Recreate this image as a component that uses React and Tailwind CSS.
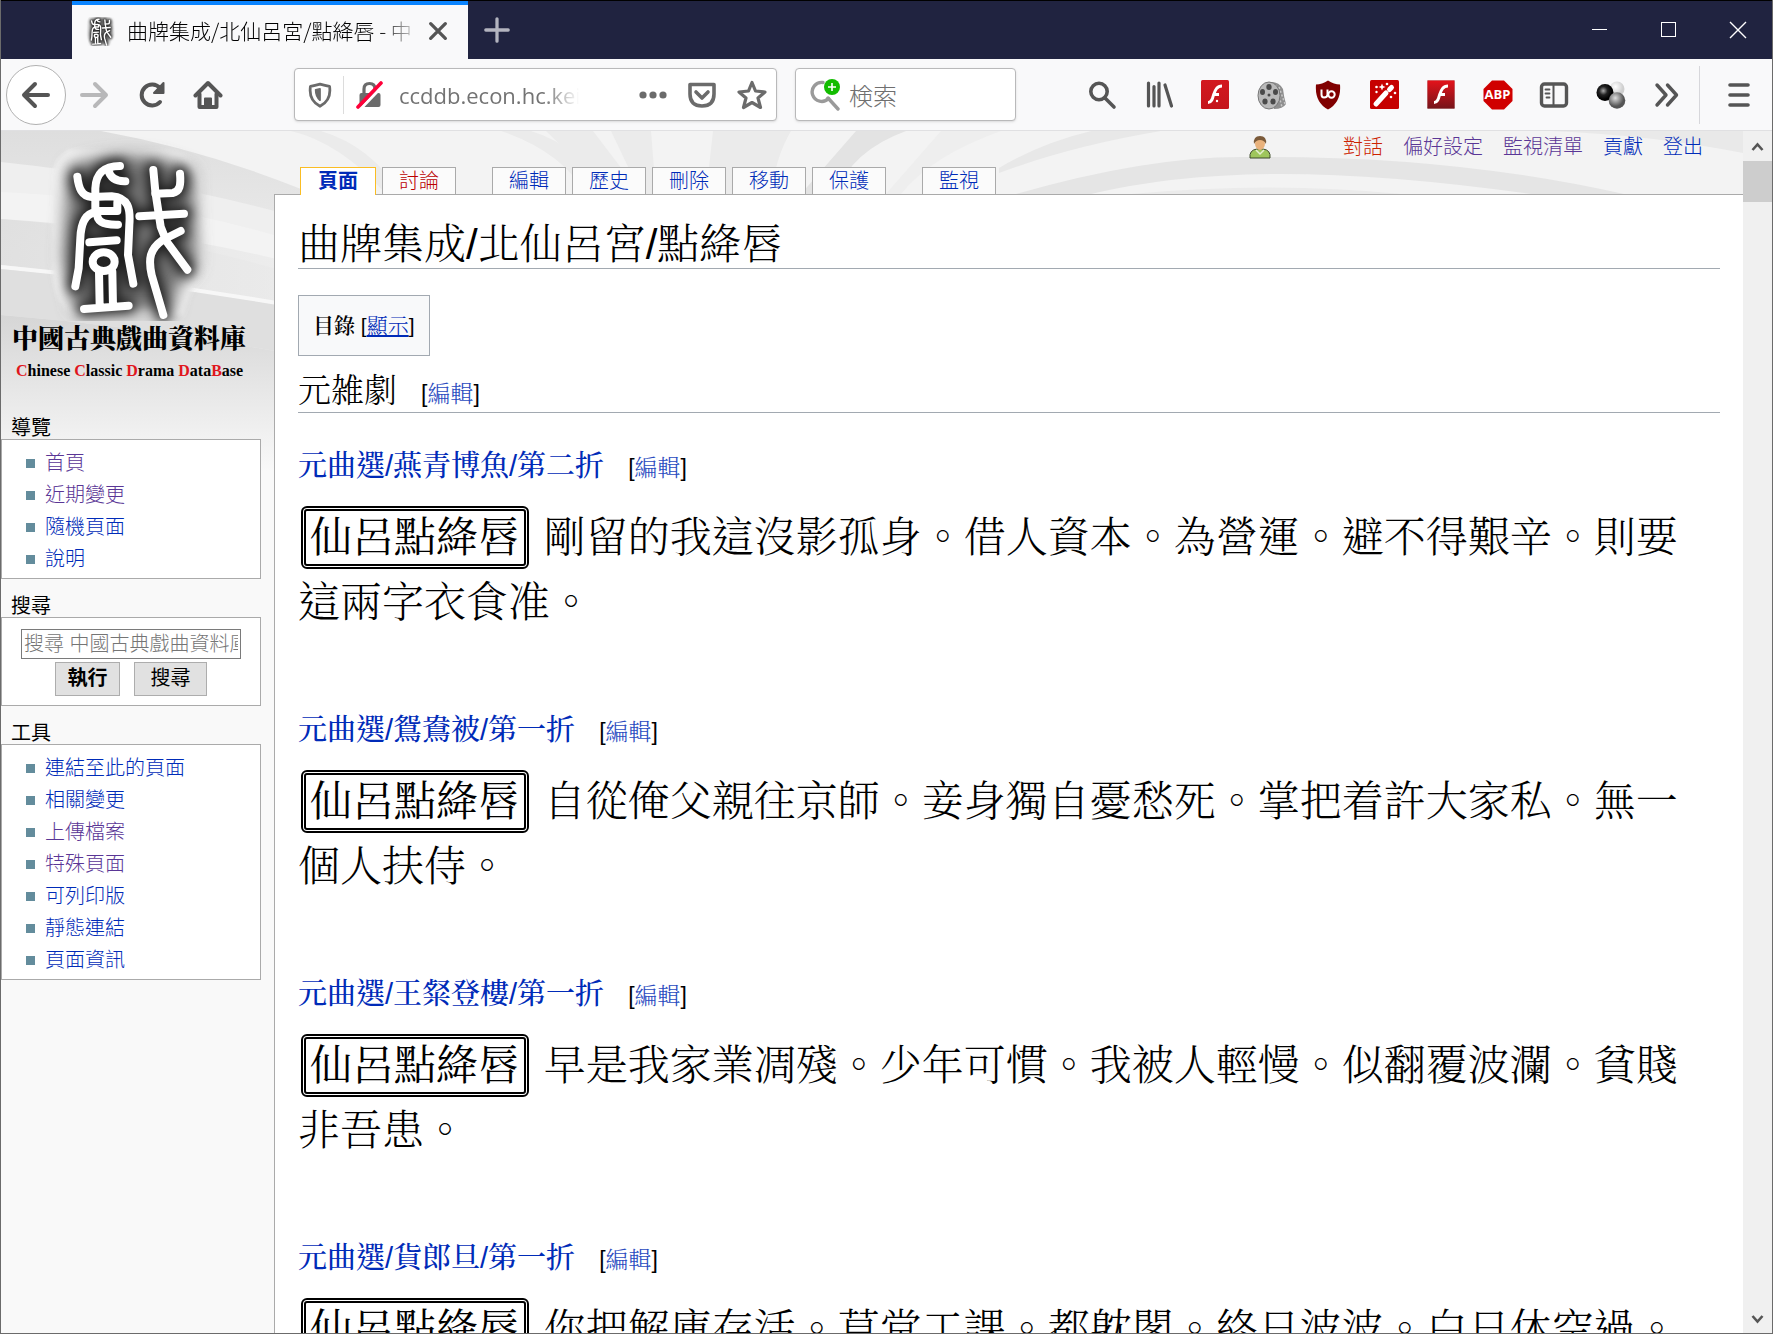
import { Fragment } from 'react';

const NAV_LINKS = [
  { label: '首頁', visited: true },
  { label: '近期變更', visited: true },
  { label: '隨機頁面' },
  { label: '說明' },
];

const TOOL_LINKS = [
  { label: '連結至此的頁面' },
  { label: '相關變更' },
  { label: '上傳檔案', visited: true },
  { label: '特殊頁面', visited: true },
  { label: '可列印版' },
  { label: '靜態連結' },
  { label: '頁面資訊' },
];

const PERSONAL_LINKS = [
  { label: '對話', color: 'text-[#cc2200]' },
  { label: '偏好設定', color: 'text-[#5a3696]' },
  { label: '監視清單', color: 'text-[#5a3696]' },
  { label: '貢獻', color: 'text-[#002bb8]' },
  { label: '登出', color: 'text-[#002bb8]' },
];

const TAB_GROUPS = [
  [
    { label: '頁面', selected: true },
    { label: '討論', missing: true },
  ],
  [{ label: '編輯' }, { label: '歷史' }, { label: '刪除' }, { label: '移動' }, { label: '保護' }],
  [{ label: '監視' }],
];

const ENTRIES = [
  { title: '元曲選/燕青博魚/第二折', text: '剛留的我這沒影孤身。借人資本。為營運。避不得艱辛。則要這兩字衣食准。' },
  { title: '元曲選/鴛鴦被/第一折', text: '自從俺父親往京師。妾身獨自憂愁死。掌把着許大家私。無一個人扶侍。' },
  { title: '元曲選/王粲登樓/第一折', text: '早是我家業凋殘。少年可慣。我被人輕慢。似翻覆波瀾。貧賤非吾患。' },
  { title: '元曲選/貨郎旦/第一折', text: '你把解庫存活。草堂工課。都躭閣。終日波波。白日休空過。' },
];

/* ---------- toolbar icons ---------- */

function Stroke({ children, width = 4, className = 'text-[#555]', size = 30 }) {
  return (
    <svg width={size} height={size} viewBox="0 0 30 30" fill="none" stroke="currentColor" strokeWidth={width} strokeLinecap="round" strokeLinejoin="round" className={className} aria-hidden="true">
      {children}
    </svg>
  );
}

function SearchIcon() {
  return (
    <Stroke width={3.6}>
      <circle cx="12" cy="11.5" r="8.2" />
      <path d="M18 18 L27 27" />
    </Stroke>
  );
}

function LibraryIcon() {
  return (
    <Stroke width={3.2}>
      <path d="M4.500 3v23M10 6.500v19.500M15 3v23M21 5l6.500 21" />
    </Stroke>
  );
}

function FlashIcon({ dark }) {
  return (
    <svg width="28" height="29" viewBox="0 0 28 29" aria-hidden="true">
      <defs>
        <linearGradient id={dark ? 'flashDark' : 'flashRed'} x1="0" y1="0" x2="0" y2="1">
          <stop offset="0" stopColor={dark ? '#e6131b' : '#d3181f'} />
          <stop offset="1" stopColor={dark ? '#74141a' : '#c4151c'} />
        </linearGradient>
      </defs>
      <rect width="28" height="29" rx="1.5" fill={dark ? 'url(#flashDark)' : 'url(#flashRed)'} stroke={dark ? '#c9a5a5' : 'none'} />
      <path d="M21 6 C15.500 6 14 11 12.500 15 C11.500 19 10.500 22.500 7 22.500 M12 14.500 H18" fill="none" stroke="#fff" strokeWidth="3" />
      {!dark && <circle cx="16" cy="21" r="1.200" fill="#fff" />}
    </svg>
  );
}

function FilmIcon() {
  return (
    <svg width="30" height="30" viewBox="0 0 30 30" aria-hidden="true">
      <path d="M12 2 Q22 1 26 9 Q27 18 29 24 Q26 29 17 29 Z" fill="#8f8f8f" />
      <path d="M19 5 L25 27 M22 7 L28 24" stroke="#c9c9c9" strokeWidth="1.5" strokeDasharray="2 2" />
      <ellipse cx="12" cy="15.500" rx="11" ry="13.500" fill="#b9b9b9" stroke="#777" />
      <g fill="#4a4a4a">
        <ellipse cx="12" cy="7" rx="2.700" ry="3" />
        <ellipse cx="5.500" cy="12" rx="2.500" ry="3" />
        <ellipse cx="18.500" cy="12" rx="2.500" ry="3" />
        <ellipse cx="8" cy="21.500" rx="2.600" ry="3" />
        <ellipse cx="16" cy="21.500" rx="2.600" ry="3" />
        <circle cx="12" cy="15" r="1.500" />
      </g>
    </svg>
  );
}

function UblockIcon() {
  return (
    <svg width="26" height="30" viewBox="0 0 26 30" aria-hidden="true">
      <path d="M13 0.500 Q19 4.500 25 4.500 Q26.500 22 13 29.500 Q-0.500 22 1 4.500 Q7 4.500 13 0.500Z" fill="#800000" />
      <path d="M6.500 9.500 V14.500 Q6.500 17.500 9 17.500 Q12.500 17.500 12.500 14.500 V9.500" fill="none" stroke="#fff" strokeWidth="2" />
      <circle cx="16.500" cy="14.500" r="3.200" fill="none" stroke="#fff" strokeWidth="2" />
    </svg>
  );
}

function WandIcon() {
  return (
    <svg width="29" height="29" viewBox="0 0 29 29" aria-hidden="true">
      <rect width="29" height="29" rx="1.5" fill="#c60000" />
      <path d="M6 24 L16 13" stroke="#fff" strokeWidth="5" strokeLinecap="round" />
      <path d="M19.500 9.500 L21.500 7.500" stroke="#fff" strokeWidth="5" strokeLinecap="round" />
      <g fill="#fff">
        <path d="M12 3.500l1 2.500 2.500 1-2.500 1-1 2.500-1-2.500-2.500-1 2.500-1z" />
        <circle cx="6.500" cy="7" r="1.300" />
        <circle cx="6.500" cy="12" r="1.200" />
        <circle cx="17" cy="4" r="1.300" />
        <circle cx="25" cy="13" r="1.300" />
        <circle cx="21" cy="17" r="1.300" />
      </g>
    </svg>
  );
}

function AbpIcon() {
  return (
    <span className="relative flex size-[30px] items-center justify-center">
      <svg width="30" height="30" viewBox="0 0 30 30" className="absolute inset-0" aria-hidden="true">
        <path d="M9 0.500 H21 L29.500 9 V21 L21 29.500 H9 L0.500 21 V9 Z" fill="#d00000" />
      </svg>
      <span className="relative font-['Open_Sans',sans-serif] text-[13px] leading-none font-bold text-white">ABP</span>
    </span>
  );
}

function SidebarIcon() {
  return (
    <Stroke width={3.4}>
      <rect x="2.500" y="4" width="25" height="22" rx="3" />
      <path d="M14.500 4.500 V25.500" strokeWidth="2" />
      <path d="M6.500 9.500h4M6.500 13.500h4M7.500 17.500h3" strokeWidth="1.800" />
    </Stroke>
  );
}

function BallsIcon() {
  return (
    <svg width="30" height="30" viewBox="0 0 30 30" aria-hidden="true">
      <defs>
        <radialGradient id="ballWhite" cx="0.4" cy="0.35"><stop offset="0" stopColor="#fff" /><stop offset="1" stopColor="#cfcfcf" /></radialGradient>
        <radialGradient id="ballBlack" cx="0.4" cy="0.4"><stop offset="0" stopColor="#aaa" /><stop offset="0.5" stopColor="#222" /><stop offset="1" stopColor="#000" /></radialGradient>
        <radialGradient id="ballGray" cx="0.4" cy="0.35"><stop offset="0" stopColor="#ddd" /><stop offset="1" stopColor="#555" /></radialGradient>
      </defs>
      <circle cx="21" cy="9" r="7.500" fill="url(#ballWhite)" />
      <circle cx="9" cy="12.500" r="8.500" fill="url(#ballBlack)" />
      <circle cx="21" cy="20.500" r="8.300" fill="url(#ballGray)" />
    </svg>
  );
}

function OverflowIcon() {
  return (
    <Stroke width={3.4}>
      <path d="M5 5 L14 15 L5 25 M15.500 5 L24.500 15 L15.500 25" />
    </Stroke>
  );
}

const EXTENSIONS = [
  { name: '尋找', icon: <SearchIcon /> },
  { name: '書庫', icon: <LibraryIcon /> },
  { name: 'Flash', icon: <FlashIcon /> },
  { name: '影片', icon: <FilmIcon /> },
  { name: 'uBlock', icon: <UblockIcon /> },
  { name: '魔術棒', icon: <WandIcon /> },
  { name: 'Flash Player', icon: <FlashIcon dark /> },
  { name: 'Adblock Plus', icon: <AbpIcon /> },
  { name: '側邊欄', icon: <SidebarIcon /> },
  { name: '擴充套件', icon: <BallsIcon /> },
  { name: '更多工具', icon: <OverflowIcon /> },
];

/* ---------- browser chrome ---------- */

const SEAL_STROKES = (
  <>
    <path d="M232 155 C236 190 245 214 275 216 L335 214 C385 218 392 250 388 300 L384 390 L400 476" />
    <path d="M360 123 C310 124 288 145 286 190 L286 262 C258 266 243 290 241 340 L236 430 L226 484" />
    <path d="M325 136 C332 162 350 170 376 169" />
    <path d="M286 258 H352 M352 232 V258 M290 258 C290 290 305 300 354 299" />
    <path d="M268 352 L350 346" />
    <ellipse cx="311" cy="410" rx="33" ry="28" />
    <path d="M297 440 L299 545 M337 440 L339 545 M252 552 L386 542" />
    <path d="M460 135 L466 200 L482 305 L500 350 L562 434" />
    <path d="M466 206 L518 204 C540 200 543 180 540 146" />
    <path d="M418 274 L552 266" />
    <path d="M542 318 L488 345 C450 372 444 400 455 450 L490 570" />
  </>
);

function Seal({ id, className, width, height, viewBox }) {
  return (
    <svg className={className} width={width} height={height} viewBox={viewBox} fill="none" strokeLinecap="round" strokeLinejoin="round" aria-hidden="true">
      <defs>
        <filter id={`${id}Halo`} x="-30%" y="-30%" width="160%" height="160%"><feGaussianBlur stdDeviation="6" /></filter>
        <filter id={`${id}Gray`} x="-30%" y="-30%" width="160%" height="160%"><feGaussianBlur stdDeviation="24" /></filter>
        <filter id={`${id}Ink`} x="-30%" y="-30%" width="160%" height="160%"><feGaussianBlur stdDeviation="18" /></filter>
      </defs>
      <path d="M205 74 H500 Q600 88 607 180 L613 400 Q605 470 572 500 L548 570 H212 Q165 530 157 440 V150 Q160 108 205 74Z" fill="#f0f0f0" filter={`url(#${id}Halo)`} />
      <path d="M205 125 Q330 75 480 100 L580 135 L592 420 L530 490 L520 555 H222 L188 400Z" fill="#757575" filter={`url(#${id}Gray)`} />
      <g stroke="#000" strokeWidth="46" filter={`url(#${id}Ink)`} opacity="0.75">{SEAL_STROKES}</g>
      <g stroke="#fff" strokeWidth="24">{SEAL_STROKES}</g>
    </svg>
  );
}

function TitleBar() {
  return (
    <div className="flex h-[59px] shrink-0 items-stretch border-t border-black bg-[#202340] pl-[71px]">
      <div className="flex w-[396px] items-center border-t-4 border-[#0a84ff] bg-[#f9f9fa] pr-[18px] pb-0.5 pl-3.5">
        <Seal id="favicon" className="shrink-0" width={29} height={29} viewBox="150 85 470 500" />
        <span className="ml-3 flex-1 overflow-hidden font-['Noto_Sans_CJK_JP',sans-serif] text-[21px] font-light whitespace-nowrap text-black [mask-image:linear-gradient(to_right,#000_250px,transparent_295px)]">
          曲牌集成/北仙呂宮/點絳唇 - 中
        </span>
        <button type="button" aria-label="關閉分頁" className="ml-2 flex size-6 items-center justify-center">
          <Stroke width={4.5} size={22}><path d="M5 5 L25 25 M25 5 L5 25" /></Stroke>
        </button>
      </div>
      <button type="button" aria-label="開新分頁" className="flex w-[58px] items-center justify-center">
        <Stroke width={3.5} size={28} className="text-[#b3b4bf]"><path d="M15 3 V27 M3 15 H27" /></Stroke>
      </button>
      <div className="ml-auto flex text-white">
        <button type="button" aria-label="最小化" className="flex w-[69px] items-center justify-center">
          <svg width="16" height="16" stroke="currentColor" aria-hidden="true"><path d="M0 7.500 H15" /></svg>
        </button>
        <button type="button" aria-label="最大化" className="flex w-[69px] items-center justify-center">
          <svg width="16" height="16" stroke="currentColor" fill="none" aria-hidden="true"><rect x="0.500" y="0.500" width="14" height="14" /></svg>
        </button>
        <button type="button" aria-label="關閉" className="flex w-[69px] items-center justify-center">
          <svg width="18" height="18" stroke="currentColor" strokeWidth="1.400" aria-hidden="true"><path d="M1 1 L17 17 M17 1 L1 17" /></svg>
        </button>
      </div>
    </div>
  );
}

function Toolbar() {
  return (
    <div className="flex h-[72px] shrink-0 items-center border-b border-[#e0e0e2] bg-[#f9f9fa] pr-px pl-[5px]">
      <button type="button" aria-label="上一頁" className="flex size-[60px] items-center justify-center rounded-full border border-[#b1b1b1] bg-white">
        <Stroke><path d="M27 15 H4 M14 4 L3 15 L14 26" /></Stroke>
      </button>
      <button type="button" aria-label="下一頁" className="flex w-14 justify-center">
        <Stroke className="text-[#b8b8b9]"><path d="M3 15 H26 M16 4 L27 15 L16 26" /></Stroke>
      </button>
      <button type="button" aria-label="重新載入" className="flex w-14 justify-center pl-1">
        <Stroke>
          <path d="M23 22 A10.500 10.500 0 1 1 23 8" />
          <path d="M26.500 3 V13 H17 Z" fill="currentColor" strokeWidth="2" />
        </Stroke>
      </button>
      <button type="button" aria-label="首頁" className="flex w-14 justify-center pl-1">
        <Stroke>
          <path d="M2.500 15.500 L15 3 L27.500 15.500" />
          <path d="M6.500 14 V27 H23.500 V14" />
          <path d="M12 27 V18.500 H18 V27" fill="currentColor" strokeWidth="2" />
        </Stroke>
      </button>

      <div className="ml-[60px] flex h-[53px] min-w-0 flex-1 items-center rounded border border-[#b9b9ba] bg-white pr-[9px] pl-3 shadow-sm">
        <Stroke width={3.2} size={26} className="shrink-0 text-[#6b6b6b]">
          <path d="M15 2.500 Q21 4 26 5 Q28.500 21 15 28 Q1.500 21 4 5 Q9 4 15 2.500Z" />
          <path d="M15 8 L10 9 Q10 17 15 21Z" fill="currentColor" strokeWidth="2" />
        </Stroke>
        <span className="mx-2.5 h-[38px] w-px shrink-0 bg-[#dcdcdc]" />
        <svg width="27" height="28" viewBox="0 0 27 28" className="ml-0.5 shrink-0" aria-hidden="true">
          <path d="M8 13 V8 Q8 2.500 13.500 2.500 Q19 2.500 19 8 V13" fill="none" stroke="#6b6b6b" strokeWidth="3.200" />
          <rect x="3.500" y="12" width="21" height="14" rx="2" fill="#6b6b6b" />
          <path d="M4 28.500 L27 4.500" stroke="#fff" strokeWidth="3" />
          <path d="M2 26 L25 2" stroke="#ff0039" strokeWidth="3.600" strokeLinecap="round" />
        </svg>
        <input
          aria-label="網址"
          defaultValue="ccddb.econ.hc.keio.ac.jp"
          className="ml-4 w-[180px] bg-transparent pt-0.5 font-['Open_Sans',sans-serif] text-[22px] text-[#737373] outline-none [mask-image:linear-gradient(to_right,#000_145px,transparent_180px)]"
        />
        <button type="button" aria-label="網頁動作" className="ml-auto">
          <svg width="28" height="28" fill="#6b6b6b" aria-hidden="true"><circle cx="4" cy="14" r="3.600" /><circle cx="14" cy="14" r="3.600" /><circle cx="24" cy="14" r="3.600" /></svg>
        </button>
        <button type="button" aria-label="Pocket" className="ml-5">
          <Stroke width={3.6} className="text-[#6b6b6b]">
            <path d="M3 4.500 H27 V14 Q27 26 15 26 Q3 26 3 14Z" />
            <path d="M9 12 L15 18 L21 12" />
          </Stroke>
        </button>
        <button type="button" aria-label="加入書籤" className="ml-5">
          <Stroke width={3.2} className="text-[#6b6b6b]">
            <path d="M15 2.500 L18.500 11 L28 12 L21 18 L23.500 27.500 L15 22.500 L6.500 27.500 L9 18 L2 12 L11.500 11Z" />
          </Stroke>
        </button>
      </div>

      <div className="ml-[18px] flex h-[53px] w-[221px] items-center rounded border border-[#b9b9ba] bg-white pl-3.5 shadow-sm">
        <svg width="31" height="32" viewBox="0 0 31 32" className="shrink-0" aria-hidden="true">
          <path d="M18.500 19.500 A9.500 9.500 0 1 1 13 3.500" fill="none" stroke="#9a9a9a" strokeWidth="3.400" strokeLinecap="round" />
          <path d="M18 19 L28 30" stroke="#9a9a9a" strokeWidth="3.400" strokeLinecap="round" />
          <circle cx="22" cy="8" r="8" fill="#12bc00" />
          <path d="M22 4 V12 M18 8 H26" stroke="#fff" strokeWidth="1.600" />
        </svg>
        <input
          aria-label="検索"
          placeholder="検索"
          className="ml-2 min-w-0 flex-1 bg-transparent font-['Noto_Sans_CJK_JP',sans-serif] text-[24px] font-light outline-none placeholder:text-[#6f6f6f]"
        />
      </div>

      <div className="ml-[71px] flex w-[595px] shrink-0 items-center justify-between">
        {EXTENSIONS.map(({ name, icon }) => (
          <button key={name} type="button" aria-label={name} className="flex w-[30px] justify-center">
            {icon}
          </button>
        ))}
      </div>
      <span className="ml-[17px] h-[58px] w-px bg-[#d7d7db]" />
      <button type="button" aria-label="選單" className="flex w-[71px] justify-center pl-1.5">
        <svg width="22" height="24" stroke="#555" strokeWidth="3.600" strokeLinecap="round" aria-hidden="true"><path d="M2 2 H20 M2 12 H20 M2 22 H20" /></svg>
      </button>
    </div>
  );
}

function Scrollbar() {
  return (
    <div className="flex w-[29px] shrink-0 flex-col items-center bg-[#f0f0f0]" aria-hidden="true">
      <svg width="29" height="30" fill="none" stroke="#555" strokeWidth="2.600"><path d="M9.500 19 L14.500 13.500 L19.500 19" /></svg>
      <div className="h-[41px] w-full bg-[#cdcdcd]" />
      <svg width="29" height="30" className="mt-auto" fill="none" stroke="#555" strokeWidth="2.600"><path d="M9.500 13 L14.500 18.500 L19.500 13" /></svg>
    </div>
  );
}

/* ---------- wiki page ---------- */

// Grey ribbons and rays behind the logo and the tab row
function Backdrop() {
  return (
    <svg className="absolute top-0 left-0" width="1742" height="340" aria-hidden="true">
      <defs>
        <linearGradient id="swath" x1="0" y1="0" x2="0" y2="1">
          <stop offset="0" stopColor="#dedede" />
          <stop offset="0.350" stopColor="#ebebeb" />
          <stop offset="1" stopColor="#ececec" />
        </linearGradient>
        <linearGradient id="low" x1="0" y1="0" x2="0" y2="1">
          <stop offset="0" stopColor="#d6d6d6" />
          <stop offset="1" stopColor="#f9f9f9" />
        </linearGradient>
        <linearGradient id="mid" x1="0" y1="0" x2="1" y2="0">
          <stop offset="0" stopColor="#dcdcdc" />
          <stop offset="1" stopColor="#ebebeb" />
        </linearGradient>
      </defs>
      <rect width="1742" height="340" fill="#f3f3f3" />
      <path d="M0 0 H100 Q200 18 300 58 V340 H0Z" fill="url(#swath)" />
      <path d="M0 31 Q160 48 300 87 V128 Q150 78 0 78Z" fill="#efefef" />
      <path d="M0 61 Q160 68 300 112 V145 Q150 100 0 88Z" fill="#f3f3f3" />
      <path d="M0 88 Q160 98 300 134 V174 Q150 150 0 134Z" fill="url(#mid)" opacity="0.7" />
      <path d="M0 134 Q150 148 300 174 V178 Q150 154 0 138Z" fill="#f7f7f7" />
      <path d="M0 138 Q150 152 300 178 V225 Q150 196 0 184Z" fill="#dfdfdf" />
      <path d="M0 184 Q150 196 300 225 V340 H0Z" fill="url(#low)" />
      <g fill="#ebebeb">
        <path d="M290 0 Q340 12 385 63 H400 Q370 15 320 0Z" />
        <path d="M500 0 Q560 20 585 63 H600 Q580 15 530 0Z" />
        <path d="M545 0 H592 L640 63 H610Z" />
        <path d="M610 0 H650 L655 63 H640Z" />
        <path d="M712 0 H790 Q775 25 770 63 H705Z" />
        <path d="M855 0 L800 63 H835 Q850 20 905 0Z" fill="#e3e3e3" />
        <path d="M940 0 L885 63 H900 Q930 25 1000 0Z" fill="#eeeeee" />
        <path d="M998 37 Q1040 12 1090 0 H1160 Q1070 15 998 42Z" fill="#e8e8e8" />
        <path d="M1015 63 Q1150 24 1250 26 Q1450 24 1623 63 H1530 Q1380 42 1270 43 Q1170 44 1090 63Z" fill="#e5e5e5" />
        <path d="M1130 63 Q1270 50 1400 63Z" />
        <path d="M1550 0 H1742 V22 Q1650 4 1550 0Z" fill="#e9e9e9" />
      </g>
    </svg>
  );
}

function Portlet({ title, children }) {
  return (
    <section className="mb-3.5">
      <h5 className="pt-0.5 pl-2.5 leading-[22px] font-normal text-black">{title}</h5>
      <div className="mr-[13px] border border-[#aaa] bg-white">{children}</div>
    </section>
  );
}

function LinkList({ links }) {
  return (
    <ul className="pt-[7px] pb-[3px] pl-6">
      {links.map(({ label, visited }) => (
        <li key={label} className="flex items-center gap-2.5 leading-8">
          <span className="size-[9px] bg-[#638c9c]" />
          <a href="#" className={visited ? 'text-[#5a3696]' : 'text-[#002bb8]'}>{label}</a>
        </li>
      ))}
    </ul>
  );
}

function Initial({ children }) {
  return <span className="text-[#e0161d]">{children}</span>;
}

function Sidebar() {
  return (
    <aside className="w-[273px] shrink-0 font-light">
      <a href="#" className="mb-[31px] block text-black">
        <Seal id="logo" width={273} height={190} viewBox="3 18 819 570" />
        <span className="-mt-1 block pl-[11px] font-['Noto_Serif_CJK_TC',serif] text-[26px] leading-10 font-black whitespace-nowrap">中國古典戲曲資料庫</span>
        <span className="block pl-[15px] font-['Liberation_Serif',serif] text-[16px] leading-[27px] font-bold whitespace-nowrap">
          <Initial>C</Initial>hinese <Initial>C</Initial>lassic <Initial>D</Initial>rama <Initial>D</Initial>ata<Initial>B</Initial>ase
        </span>
      </a>
      <Portlet title="導覽">
        <LinkList links={NAV_LINKS} />
      </Portlet>
      <Portlet title="搜尋">
        <form className="flex flex-wrap justify-center gap-x-3.5 gap-y-[3px] px-4 pt-[11px] pb-[9px]" onSubmit={(e) => e.preventDefault()}>
          <input
            type="text"
            aria-label="搜尋"
            placeholder="搜尋 中國古典戲曲資料庫"
            className="h-[30px] w-[220px] border border-[#7a7a7a] bg-white px-0.5 placeholder:text-[#757575]"
          />
          <button type="submit" className="h-[34px] w-[65px] border border-[#adadad] bg-[#e1e1e1] pb-0.5 leading-none font-bold text-black">執行</button>
          <button type="submit" className="h-[34px] w-[73px] border border-[#adadad] bg-[#e1e1e1] pb-0.5 leading-none font-normal text-black">搜尋</button>
        </form>
      </Portlet>
      <Portlet title="工具">
        <LinkList links={TOOL_LINKS} />
      </Portlet>
    </aside>
  );
}

function tabClass({ selected, missing }) {
  const base = 'block border border-b-0 leading-[26px]';
  if (selected) return `${base} relative -mb-px border-[#fabd23] bg-white px-[17px] pb-px font-bold text-[#002bb8]`;
  if (missing) return `${base} border-[#aaa] bg-[#fbfbfb] px-4 text-[#ba0000]`;
  return `${base} border-[#aaa] bg-[#fbfbfb] px-4 text-[#002bb8]`;
}

function Header() {
  return (
    <header className="font-light">
      <nav className="flex h-9 items-center justify-end gap-5 pr-10 pb-1">
        <svg width="22" height="24" viewBox="0 0 22 24" className="mr-[52px]" aria-hidden="true">
          <path d="M1 23 Q0 15 8 14 H14 Q22 15 21 23Z" fill="#9fc65c" stroke="#3d4a2a" />
          <ellipse cx="11" cy="8.500" rx="5" ry="6.500" fill="#e9b27c" />
          <path d="M5 9 Q4 1 11 1 Q18 1 17 9 Q15 5 11 5 Q7 5 5 9Z" fill="#7b5a39" />
          <path d="M7 15 L11 19 L15 15" fill="none" stroke="#e4efd0" strokeWidth="1.500" />
        </svg>
        {PERSONAL_LINKS.map(({ label, color }) => (
          <a key={label} href="#" className={color}>{label}</a>
        ))}
      </nav>
      <nav className="flex items-end gap-9 pl-[26px]">
        {TAB_GROUPS.map((group, i) => (
          <div key={i} className="flex gap-1.5">
            {group.map((tab) => (
              <a key={tab.label} href="#" className={tabClass(tab)}>{tab.label}</a>
            ))}
          </div>
        ))}
      </nav>
    </header>
  );
}

function EditLink() {
  return (
    <span className="ml-6 text-[23px] leading-none font-light text-black">
      [<a href="#" className="text-[#2a4bc0]">編輯</a>]
    </span>
  );
}

function Article() {
  return (
    <article className="flex-1 border-t border-l border-[#aaa] bg-white px-[23px] pt-[27px] font-['Liberation_Sans','Noto_Serif_CJK_TC',serif] text-black">
      <h1 className="border-b border-[#a2a9b1] text-[42px] leading-[46px] font-light">曲牌集成/北仙呂宮/點絳唇</h1>
      <div className="mt-[26px] inline-block border border-[#a2a9b1] bg-[#f8f9fa] px-3.5 pt-px align-top text-[21px] leading-[58px]">
        <h2 className="inline font-semibold">目錄</h2>{' '}
        <span className="font-light">[<a href="#" className="text-[#002bb8] underline">顯示</a>]</span>
      </div>
      <h2 className="mt-3.5 border-b border-[#a2a9b1] text-[33px] leading-[42px] font-light">元雑劇<EditLink /></h2>
      <div className="mt-[33px]">
        {ENTRIES.map(({ title, text }) => (
          <Fragment key={title}>
            <h3 className="text-[29px] leading-10 font-medium">
              <a href="#" className="text-[#002bb8]">{title}</a>
              <EditLink />
            </h3>
            <p className="mt-[19px] mb-[75px] pr-5 text-[42px] leading-[65px] font-light">
              <span className="mx-[3px] inline-block rounded-md border-[5px] border-double border-black px-1 leading-[53px] font-normal">仙呂點絳唇</span>{' '}
              {text}
            </p>
          </Fragment>
        ))}
      </div>
    </article>
  );
}

export default function App() {
  return (
    <div className="flex h-screen flex-col overflow-hidden border-r border-b border-l border-[#6b6b6b] bg-white">
      <TitleBar />
      <Toolbar />
      <div className="flex min-h-0 flex-1">
        <main className="relative min-w-0 flex-1 overflow-hidden bg-[#f9f9f9] font-['Liberation_Sans','Noto_Sans_CJK_TC',sans-serif] text-[20px]">
          <Backdrop />
          <div className="relative flex min-h-full">
            <Sidebar />
            <div className="flex min-w-0 flex-1 flex-col">
              <Header />
              <Article />
            </div>
          </div>
        </main>
        <Scrollbar />
      </div>
    </div>
  );
}
